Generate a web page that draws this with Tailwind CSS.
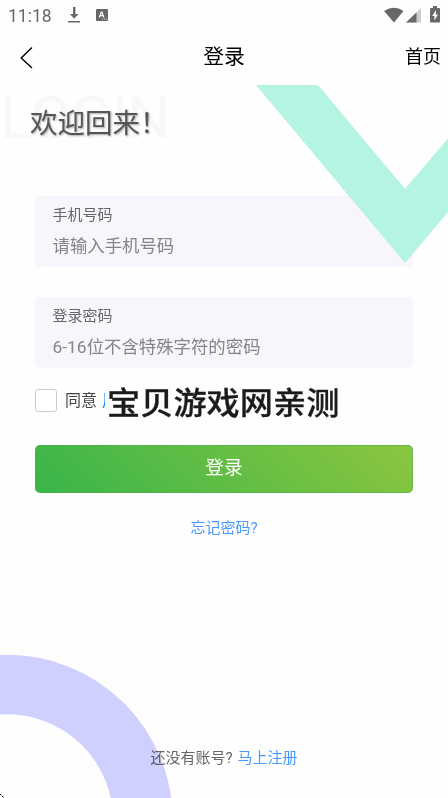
<!DOCTYPE html>
<html lang="zh-CN">
<head>
<meta charset="utf-8">
<title>登录</title>
<script src="https://cdn.jsdelivr.net/npm/@tailwindcss/browser@4"></script>
</head>
<body class="bg-white">
<div class="relative flex h-[798px] w-[448px] flex-col overflow-hidden bg-[#fefefe] font-[Roboto,'Noto_Sans_CJK_SC',sans-serif] text-[#666]">
  <!-- Status bar -->
  <div class="flex h-[30px] shrink-0 items-center pl-[8px] pr-[8px]">
    <span class="w-[60px] pt-[1px] text-[17.5px] leading-[30px] text-[#686868]">11:18</span>
    <svg class="h-[16px] w-[12px]" viewBox="0 0 12 16" fill="#686868"><path d="M5 0h2.400v7H10.500L6.200 11.800 1.900 7H5zM0 14h12v1.500H0z"/></svg>
    <svg class="ml-[16px] h-[12px] w-[12px]" viewBox="0 0 12 12"><rect width="12" height="12" rx="1" fill="#686868"/><path d="M3.300 8.500 5.300 3h.6l2 5.500M4 6.700h3.200" stroke="#fff" stroke-width="1.200" fill="none"/><path d="M6 10h1m1 0h1m1 0h1" stroke="#fff" stroke-width=".8"/></svg>
    <svg class="-mt-[1px] ml-auto h-[16px] w-[20px]" viewBox="0 0 20 16" fill="#686868"><path d="M0 4Q10-2.500 19.500 4L10 15.500z"/></svg>
    <svg class="ml-[2px] h-[15px] w-[16px]" viewBox="0 0 16 15"><path d="M15 0v14.500H0z" fill="#ccc"/><path d="M10.500 4.400v10.100H0z" fill="#686868"/></svg>
    <svg class="-mt-[1px] ml-[8px] h-[17px] w-[10px]" viewBox="0 0 10 17"><path d="M3 0h4v2h2q1 0 1 1v12.500q0 1-1 1H1q-1 0-1-1V3q0-1 1-1h2z" fill="#686868"/><path d="M6 4 2.200 10h2.200v4.500L8 8.500H5.800z" fill="#fff"/></svg>
  </div>
  <!-- Navigation -->
  <header class="grid h-[55px] shrink-0 grid-cols-[1fr_auto_1fr] items-center pl-[20px] pr-[7px] text-black">
    <svg class="h-[22px] w-[14px]" viewBox="0 0 14 22" fill="none" stroke="#000" stroke-width="1.400"><path d="M12 .500 1.200 11 12 21"/></svg>
    <h1 class="pr-[13px] text-[20.800px] leading-[53px]">登录</h1>
    <span class="pb-[2px] text-right text-[18px] leading-[53px]">首页</span>
  </header>
  <!-- Welcome -->
  <div class="grid h-[111px] shrink-0">
    <div class="col-start-1 row-start-1 text-[59.500px] leading-[67px] text-[#f8f8f8]">LOGIN</div>
    <h2 class="z-1 col-start-1 row-start-1 pl-[30px] pt-[19px] text-[27.500px] leading-[40px] text-[#555] [text-shadow:1px_1px_2px_#aaa]">欢迎回来！</h2>
  </div>
  <!-- Form -->
  <main class="flex shrink-0 flex-col px-[35px]">
    <label class="mb-[30px] block h-[71px] rounded-[5px] bg-[#f8f5fc] pl-[17.500px] pt-[8px]">
      <span class="block text-[15px] leading-[22px]">手机号码</span>
      <span class="mt-[7px] block text-[17.400px] leading-[26px] text-[#858585]">请输入手机号码</span>
    </label>
    <label class="block h-[71px] rounded-[5px] bg-[#f8f5fc] pl-[17.500px] pt-[8px]">
      <span class="block text-[15px] leading-[22px]">登录密码</span>
      <span class="mt-[7px] block text-[17.400px] leading-[26px] text-[#858585]">6-16位不含特殊字符的密码</span>
    </label>
    <div class="flex h-[77px] items-start pt-[21px]">
      <span class="h-[23px] w-[22px] rounded-[3px] border-[1.500px] border-[#ccc] bg-white"></span>
      <span class="ml-[8px] flex pt-[1px] text-[16px] leading-[22px] text-[#444]">同意<span class="ml-[5px] w-[3px] overflow-hidden text-[#1683ff]">用</span></span>
      <span class="-mt-[3px] ml-[2px] origin-center scale-y-[.93] text-[33.200px] font-medium leading-[36px] text-[#1b1b1b] [-webkit-text-stroke:.3px_#1b1b1b]">宝贝游戏网亲测</span>
    </div>
    <button class="h-[47.500px] rounded-[5px] border border-[#4caf50]/60 bg-[linear-gradient(45deg,#39b54a,#8cc63f)] bg-origin-border text-[18.700px] leading-[45px] text-white">登录</button>
    <a class="mt-[23.500px] text-center text-[15px] leading-[24px] text-[#4899ff]">忘记密码?</a>
  </main>
  <footer class="mt-auto flex h-[52px] shrink-0 justify-center text-[15px] leading-[24px]"><span class="text-[#666]">还没有账号?</span><a class="ml-[5px] text-[#4899ff]">马上注册</a></footer>
  <!-- Background ornaments -->
  <svg class="pointer-events-none absolute right-0 top-[85px] h-[178px] w-[192px]" viewBox="0 0 192 178"><path d="M0 0H62L149 104 192 53.500V127L149 178z" fill="#b5f3e2"/></svg>
  <svg class="pointer-events-none absolute bottom-0 left-0 h-[144px] w-[173px] mix-blend-multiply" viewBox="0 0 173 144"><circle cx="7" cy="166.500" r="136" fill="none" stroke="#d1d1ff" stroke-width="59.500"/><path d="M0 140l4 4" stroke="#111" stroke-dasharray="2 1"/></svg>
</div>
</body>
</html>
